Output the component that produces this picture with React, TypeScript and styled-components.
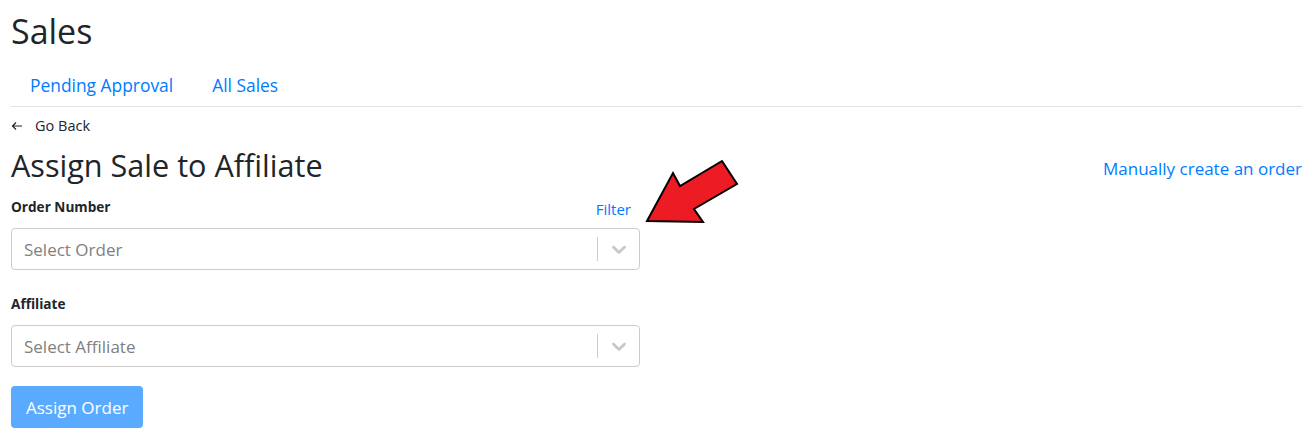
import React from "react";
import styled, { createGlobalStyle } from "styled-components";

const Global = createGlobalStyle`
  html, body { margin: 0; padding: 0; background: #fff; }
  body {
    font-family: "Open Sans", "Noto Sans", sans-serif;
    color: #212529;
    font-size: 17px;
  }
  * { box-sizing: border-box; }
`;

const Page = styled.div`
  position: relative;
  padding: 0 10px 0 11px;
`;

const Title = styled.h1`
  margin: 0;
  padding-top: 9px;
  font-size: 34px;
  font-weight: 400;
  line-height: 44px;
`;

const Tabs = styled.nav`
  display: flex;
  margin-top: 19px;
  border-bottom: 1px solid #dee2e6;
`;

const TabLink = styled.a`
  color: #007bff;
  font-size: 17.4px;
  line-height: 24px;
  padding: 1px 20px 9px 19px;
  text-decoration: none;
`;

const Back = styled.div`
  display: flex;
  align-items: center;
  gap: 12px;
  margin-top: 9px;
  font-size: 14.5px;
  line-height: 20px;
  color: #212529;
`;

const HeaderRow = styled.div`
  display: flex;
  justify-content: space-between;
  align-items: flex-end;
  margin-top: 9px;
`;

const Heading = styled.h2`
  margin: 0;
  font-size: 30.6px;
  font-weight: 400;
  line-height: 40px;
`;

const Link = styled.a`
  color: #007bff;
  font-size: 17px;
  line-height: 24px;
  text-decoration: none;
  padding-bottom: 4px;
`;

const Form = styled.div`
  width: 629px;
`;

const Field = styled.div<{ $top: number }>`
  margin-top: ${(p) => p.$top}px;
`;

const LabelRow = styled.div`
  display: flex;
  justify-content: space-between;
  align-items: flex-end;
  height: 22px;
  margin-bottom: 7px;
`;

const Label = styled.label`
  font-size: 13.6px;
  font-weight: 700;
  line-height: 18px;
  margin-bottom: 5px;
`;

const Filter = styled.a`
  color: #007bff;
  font-size: 15px;
  line-height: 20px;
  margin-right: 9px;
  margin-bottom: 2px;
  text-decoration: none;
`;

const Select = styled.div`
  display: flex;
  align-items: center;
  height: 42px;
  border: 1px solid #ccc;
  border-radius: 4px;
  background: #fff;
`;

const Placeholder = styled.span`
  flex: 1;
  padding-left: 12px;
  color: #808080;
  font-size: 17px;
`;

const Separator = styled.span`
  width: 1px;
  height: 24px;
  background: #ccc;
`;

const Indicator = styled.span`
  display: flex;
  align-items: center;
  justify-content: center;
  width: 41px;
  color: #c8c8c8;
`;

const Button = styled.button`
  margin-top: 19px;
  height: 42px;
  padding: 0 15px;
  border: none;
  border-radius: 4px;
  background: #5aabff;
  color: #fff;
  font-family: inherit;
  font-size: 17px;
`;

const Arrow = styled.svg`
  position: absolute;
  left: 640px;
  top: 155px;
`;

const Chevron = () => (
  <svg width="24" height="24" viewBox="0 0 20 20" fill="currentColor">
    <path d="M4.516 7.548c0.436-0.446 1.043-0.481 1.576 0l3.908 3.747 3.908-3.747c0.533-0.481 1.141-0.446 1.574 0 0.436 0.445 0.408 1.197 0 1.615-0.406 0.418-4.695 4.502-4.695 4.502-0.217 0.223-0.502 0.335-0.787 0.335s-0.57-0.112-0.789-0.335c0 0-4.287-4.084-4.695-4.502s-0.436-1.17 0-1.615z" />
  </svg>
);

const SelectBox = ({ text }: { text: string }) => (
  <Select>
    <Placeholder>{text}</Placeholder>
    <Separator />
    <Indicator>
      <Chevron />
    </Indicator>
  </Select>
);

export default function App() {
  return (
    <>
      <Global />
      <Page>
        <Title>Sales</Title>
        <Tabs>
          <TabLink href="#">Pending Approval</TabLink>
          <TabLink href="#">All Sales</TabLink>
        </Tabs>
        <Back>
          <svg width="12" height="10" viewBox="0 0 12 10" fill="none" stroke="#212529" strokeWidth="1.2">
            <path d="M11 5H1.5M5 1.5L1.5 5L5 8.5" />
          </svg>
          <span>Go Back</span>
        </Back>
        <HeaderRow>
          <Heading>Assign Sale to Affiliate</Heading>
          <Link href="#">Manually create an order</Link>
        </HeaderRow>
        <Form>
          <Field $top={14}>
            <LabelRow>
              <Label>Order Number</Label>
              <Filter href="#">Filter</Filter>
            </LabelRow>
            <SelectBox text="Select Order" />
          </Field>
          <Field $top={26}>
            <LabelRow>
              <Label>Affiliate</Label>
            </LabelRow>
            <SelectBox text="Select Affiliate" />
          </Field>
          <Button>Assign Order</Button>
        </Form>
        <Arrow width="110" height="80" viewBox="640 155 110 80">
          <polygon
            points="647,221 673,173 680,186 722,161 737,184 694,209 703,222"
            fill="#ed1c24"
            stroke="#000"
            strokeWidth="2"
            strokeLinejoin="miter"
          />
        </Arrow>
      </Page>
    </>
  );
}
